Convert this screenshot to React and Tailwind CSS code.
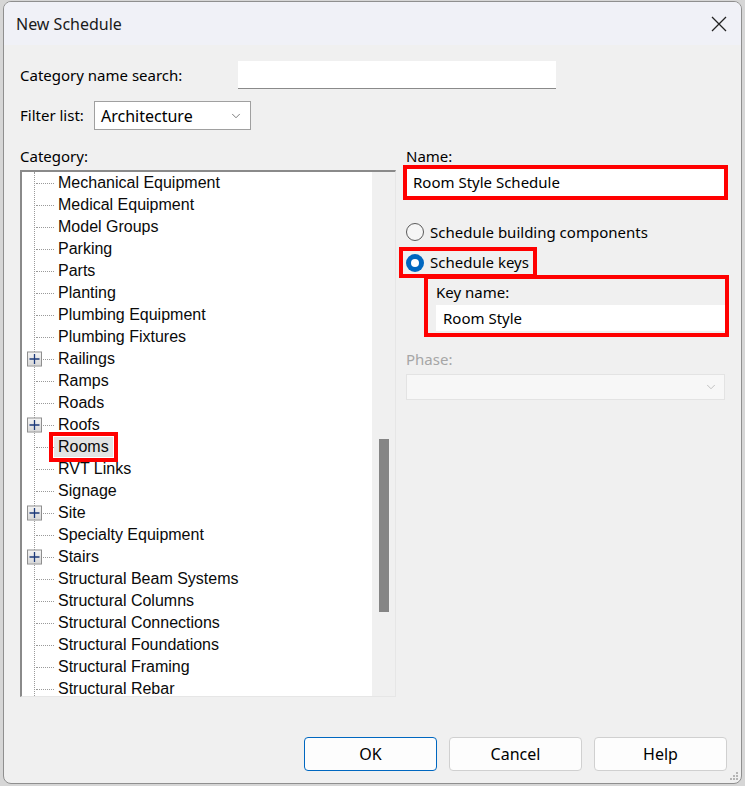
import { ChevronDown } from "lucide-react";

const categories = [
  { name: "Mechanical Equipment" },
  { name: "Medical Equipment" },
  { name: "Model Groups" },
  { name: "Parking" },
  { name: "Parts" },
  { name: "Planting" },
  { name: "Plumbing Equipment" },
  { name: "Plumbing Fixtures" },
  { name: "Railings", expandable: true },
  { name: "Ramps" },
  { name: "Roads" },
  { name: "Roofs", expandable: true },
  { name: "Rooms", selected: true },
  { name: "RVT Links" },
  { name: "Signage" },
  { name: "Site", expandable: true },
  { name: "Specialty Equipment" },
  { name: "Stairs", expandable: true },
  { name: "Structural Beam Systems" },
  { name: "Structural Columns" },
  { name: "Structural Connections" },
  { name: "Structural Foundations" },
  { name: "Structural Framing" },
  { name: "Structural Rebar" },
];

const ui = "font-['Noto_Sans','Open_Sans',sans-serif]";

function Expander() {
  return (
    <span className="absolute left-[-8px] top-1/2 flex h-[15px] w-[15px] -translate-y-1/2 items-center justify-center border border-[#8e8e8e] bg-gradient-to-b from-[#f4f4f4] to-[#d8d8d8]">
      <svg width="11" height="11" viewBox="0 0 11 11">
        <path d="M0.5 5.5h10M5.5 0.5v10" stroke="#1c3a7a" strokeWidth="1.3" />
      </svg>
    </span>
  );
}

function TreeRow({ item }) {
  return (
    <div className="relative flex h-[22px] items-center">
      {item.expandable && <Expander />}
      <span className="ml-[1px] w-[18px] border-t border-dotted border-[#9a9a9a]" />
      {item.selected ? (
        <span className="bg-[#e3e3e3] px-[4px] leading-[20px] outline-[4px] outline-offset-[1px] outline-[#ff0000] outline-solid">
          {item.name}
        </span>
      ) : (
        <span className="ml-[4px]">{item.name}</span>
      )}
    </div>
  );
}

function Radio({ checked }) {
  return checked ? (
    <span className="flex h-[18px] w-[18px] shrink-0 items-center justify-center rounded-full bg-[#0067c0]">
      <span className="h-[8px] w-[8px] rounded-full bg-white" />
    </span>
  ) : (
    <span className="h-[18px] w-[18px] shrink-0 rounded-full border border-[#5a5a5a] bg-[#f6f6f6]" />
  );
}

export default function App() {
  return (
    <div className="h-[786px] w-[745px] bg-[#d6d6d6] pb-[2px] pl-[3px] pr-[3px] pt-[1px]">
      <div className={`flex h-full flex-col overflow-hidden rounded-[8px] border border-[#8f8f8f] bg-[#f0f0f0] text-[15px] text-black ${ui}`}>
        {/* title bar */}
        <div className="flex h-[43px] shrink-0 items-center justify-between bg-[#f0f1f7] pl-[12px] pr-[14px]">
          <span className="text-[16px] text-[#1a1a1a]">New Schedule</span>
          <svg width="16" height="16" viewBox="0 0 16 16">
            <path d="M1 1l14 14M15 1L1 15" stroke="#222" strokeWidth="1.3" />
          </svg>
        </div>

        <div className="flex flex-1 flex-col pl-[16px] pr-[13px]">
          {/* search */}
          <div className="mt-[16px] flex h-[28px] items-center">
            <span className="w-[218px]">Category name search:</span>
            <div className="h-[28px] w-[318px] border-b border-[#8a8a8a] bg-white" />
          </div>

          {/* filter */}
          <div className="mt-[12px] flex h-[29px] items-center">
            <span className="w-[74px]">Filter list:</span>
            <div className="flex h-[29px] w-[157px] items-center justify-between border border-[#a0a0a0] bg-white pl-[6px] pr-[7px]">
              <span className="text-[16px]">Architecture</span>
              <ChevronDown size={14} strokeWidth={1.3} className="text-[#555]" />
            </div>
          </div>

          <div className="mt-[15px] flex">
            {/* category tree */}
            <div className="w-[376px] shrink-0">
              <div className="h-[22px] leading-[22px]">Category:</div>
              <div className="mt-[3px] flex h-[527px] overflow-hidden border-l-2 border-t-2 border-b border-r border-b-[#e6e6e6] border-l-[#8a8a8a] border-r-[#e6e6e6] border-t-[#8a8a8a] bg-white">
                <div className="relative flex-1 overflow-hidden pl-[13px] font-['Liberation_Sans',Arial,sans-serif] text-[16px] text-[#0a0a0a]">
                  <div className="absolute bottom-0 left-[12px] top-0 border-l border-dotted border-[#9a9a9a]" />
                  {categories.map((item) => (
                    <TreeRow key={item.name} item={item} />
                  ))}
                </div>
                <div className="flex w-[23px] shrink-0 justify-center bg-[#f0f0f0]">
                  <div className="mt-[267px] h-[173px] w-[10px] bg-[#858585]" />
                </div>
              </div>
            </div>

            {/* schedule options */}
            <div className="ml-[7px] w-[325px] shrink-0">
              <div className="h-[22px] pl-[3px] leading-[22px]">Name:</div>
              <div className="mt-[-2px] flex h-[35px] items-center border-4 border-[#ff0000] bg-white pl-[6px] text-[15px]">
                Room Style Schedule
              </div>

              <label className="ml-[3px] mt-[22px] flex h-[20px] items-center gap-[6px] text-[15px]">
                <Radio />
                Schedule building components
              </label>

              <div className="ml-[-4px] mt-[5px] flex h-[31px] w-[138px] items-center gap-[6px] whitespace-nowrap border-4 border-[#ff0000] pl-[3px] text-[15px]">
                <Radio checked />
                Schedule keys
              </div>

              <div className="ml-[21px] mt-[-3px] h-[62px] w-[305px] border-4 border-[#ff0000] pl-[8px]">
                <div className="h-[26px] leading-[26px]">Key name:</div>
                <div className="flex h-[26px] items-center bg-white pl-[7px] text-[15px]">Room Style</div>
              </div>

              <div className="mt-[11px] h-[22px] pl-[3px] leading-[22px] text-[#a6a6a6]">Phase:</div>
              <div className="ml-[3px] mt-[4px] flex h-[26px] w-[319px] items-center justify-end border border-[#e3e3e3] bg-[#f7f7f7] pr-[6px]">
                <ChevronDown size={14} strokeWidth={1.3} className="text-[#b0b0b0]" />
              </div>
            </div>
          </div>

          {/* buttons */}
          <div className="mt-[40px] flex justify-end gap-[12px] pr-[1px]">
            <button className="h-[34px] w-[133px] rounded-[4px] border border-[#0067c0] bg-[#fdfdfd] text-[16px]">OK</button>
            <button className="h-[34px] w-[133px] rounded-[4px] border border-[#d0d0d0] bg-[#fdfdfd] text-[16px]">Cancel</button>
            <button className="h-[34px] w-[133px] rounded-[4px] border border-[#d0d0d0] bg-[#fdfdfd] text-[16px]">Help</button>
          </div>
          <div className="mr-[-11px] mt-auto flex justify-end pb-[2px]">
            <svg width="10" height="10" viewBox="0 0 10 10">
              <g fill="#b5b5b5">
                <rect x="7" y="1" width="2" height="2" />
                <rect x="4" y="4" width="2" height="2" />
                <rect x="7" y="4" width="2" height="2" />
                <rect x="1" y="7" width="2" height="2" />
                <rect x="4" y="7" width="2" height="2" />
                <rect x="7" y="7" width="2" height="2" />
              </g>
            </svg>
          </div>
        </div>
      </div>
    </div>
  );
}
